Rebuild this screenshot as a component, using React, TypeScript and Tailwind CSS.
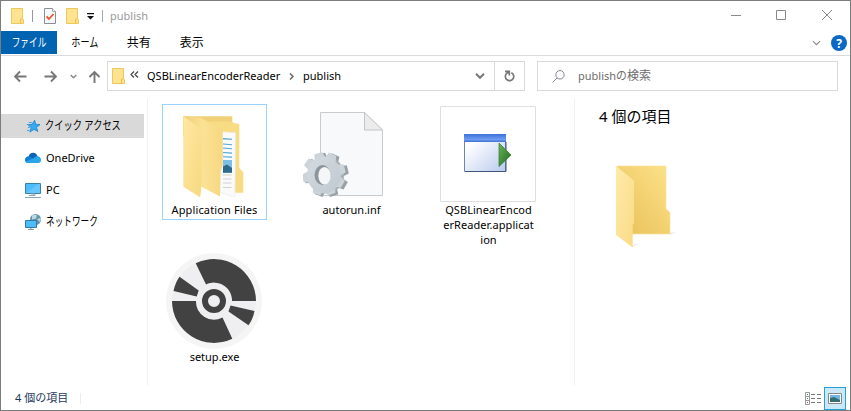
import type { ReactNode } from "react";

function SmallFolder() {
  return (
    <svg className="block h-[16px] w-[13px] shrink-0" viewBox="0 0 13 16">
      <path d="M.5.5h11v10l1 1v4H.5z" fill="#ffe391" stroke="#eec95a" />
      <path d="M9.5 15.5v-4.500h2" fill="none" stroke="#eabf48" />
    </svg>
  );
}

function CheckDoc() {
  return (
    <svg className="block h-[16px] w-[12px]" viewBox="0 0 12 16">
      <path d="M.5.5h8l3 3v12H.5z" fill="#f7fafc" stroke="#8b8f92" />
      <path d="M8.500.5v3h3" fill="#fff" stroke="#a4a7aa" />
      <path d="M2.500 8.500l2.500 2.500 4.500-5" fill="none" stroke="#e8562b" strokeWidth="1.800" />
    </svg>
  );
}

function Chevron({ className, color = "#777", w = 1.6 }: { className: string; color?: string; w?: number }) {
  return (
    <svg className={className} viewBox="0 0 10 6" fill="none" stroke={color} strokeWidth={w}>
      <path d="M1 .8l4 4 4-4" />
    </svg>
  );
}

function Arrow({ className, d }: { className: string; d: string }) {
  return (
    <svg className={className} viewBox="0 0 13 13" fill="none" stroke="#777" strokeWidth="1.9">
      <path d={d} />
    </svg>
  );
}

function FolderPreview() {
  return (
    <svg className="block h-[86px] w-[66px]" viewBox="0 0 66 86">
      <defs>
        <linearGradient id="pback" x1="0" y1="1" x2="1" y2="0">
          <stop offset="0.2" stopColor="#ecc661" />
          <stop offset="1" stopColor="#fde28a" />
        </linearGradient>
        <linearGradient id="pfront" x1="0" y1="0" x2="1" y2="1">
          <stop offset="0" stopColor="#ffeaa9" />
          <stop offset="1" stopColor="#f9db86" />
        </linearGradient>
      </defs>
      <path d="M50 67.500h11l-7 2.300zM17 80l7-2-7 4z" fill="#ececec" />
      <path d="M1 1h49v43l4 3.500v21.500H1z" fill="url(#pback)" stroke="#fbe49b" strokeWidth=".7" />
      <path d="M0 1l18 14.500V58l-1.300 2v22.500L0 70z" fill="url(#pfront)" />
    </svg>
  );
}

function FilesFolder() {
  return (
    <svg className="block size-[96px]" viewBox="0 0 96 96">
      <defs>
        <linearGradient id="ffront" x1="0" y1="0" x2="1" y2="1">
          <stop offset="0" stopColor="#ffe8a3" />
          <stop offset="1" stopColor="#f7d980" />
        </linearGradient>
        <linearGradient id="fmid" x1="0" y1="0" x2="1" y2="0">
          <stop offset="0" stopColor="#efcf73" />
          <stop offset="0.5" stopColor="#fbe195" />
          <stop offset="1" stopColor="#f6d87f" />
        </linearGradient>
      </defs>
      <path d="M17 10.200h49.300v20H17z" fill="#f1d178" />
      <path d="M43 15.500h20l10.300 2.700V62l4 4.300v20.400H54z" fill="#f8dc84" />
      <path d="M56 25.700l13.700 1L69 91.300l-15-4.600z" fill="#fafafa" stroke="#e3e3e3" strokeWidth=".5" />
      <path d="M57 33.500h9M57 69h8.500M57 73h8.500M57 77h8.500M57 81.500h8.500" stroke="#c3c8cb" strokeWidth=".8" />
      <path d="M57 32.500l9 .8M57 38l9 .7M57 42l9 .7M57 46.500l9 .6M57 50.700l9 .4" stroke="#4aa9dc" strokeWidth="1.100" />
      <path d="M57 54h9v12.700h-9z" fill="#7cc0e8" />
      <path d="M57 60.500l4-2 5 3.500v4.700h-9z" fill="#2f6a8c" />
      <path d="M17.300 10.200l18.400 2 21 12V60L54 65v25.500L34 80z" fill="url(#fmid)" />
      <path d="M17.300 10.200l17.900 12.500v62L34 91.300 17.300 80.700z" fill="url(#ffront)" />
    </svg>
  );
}

const teeth = [30, 70, 112, 170, 216, 256, 295, 346];

function InfFile() {
  return (
    <svg className="block size-[96px]" viewBox="0 0 96 96">
      <defs>
        <linearGradient id="gear" x1="0" y1="0" x2="1" y2="1">
          <stop offset="0" stopColor="#d5dbe0" />
          <stop offset="1" stopColor="#bfc9d0" />
        </linearGradient>
      </defs>
      <path d="M17.500 6.500h44L79.500 24v65.500h-62z" fill="#f8f9fa" stroke="#c9cacb" />
      <path d="M61.500 6.500V24h18z" fill="#ececec" stroke="#c4c5c6" />
      {teeth.map((a) => (
        <path key={"b" + a} d="M12-5.500l10 1v8.500l-10 2z" transform={`translate(23.500 69) rotate(${a})`} fill="#98a1a7" />
      ))}
      <ellipse cx="24" cy="69" rx="17" ry="18.500" fill="#a7b0b6" />
      {teeth.map((a) => (
        <path key={a} d="M12-6.500l9.500 2v8l-9.500 3z" transform={`translate(21 68) rotate(${a})`} fill="#ccd4d9" />
      ))}
      <ellipse cx="21" cy="69" rx="17" ry="18.500" fill="url(#gear)" />
      <ellipse cx="19.500" cy="69" rx="8" ry="10" fill="#8d969c" />
      <ellipse cx="21.500" cy="69.800" rx="6.200" ry="8.800" fill="#f5f6f7" />
    </svg>
  );
}

function ApplicationIcon() {
  return (
    <svg className="block size-[96px]" viewBox="0 0 96 96">
      <defs>
        <linearGradient id="win" x1="0" y1="0" x2="1" y2="1">
          <stop offset="0.2" stopColor="#fff" />
          <stop offset="1" stopColor="#b9c9ee" />
        </linearGradient>
        <linearGradient id="play" x1="0" y1="0" x2="1" y2="1">
          <stop offset="0" stopColor="#6bb45c" />
          <stop offset="1" stopColor="#1d6a1c" />
        </linearGradient>
        <linearGradient id="bar" x1="0" y1="0" x2="0" y2="1">
          <stop offset="0" stopColor="#3c70d8" />
          <stop offset="0.7" stopColor="#6f9cf2" />
          <stop offset="1" stopColor="#3e6fd0" />
        </linearGradient>
      </defs>
      <path d="M.5.5h95v95H.5z" fill="#fff" stroke="#dedede" />
      <path d="M24.500 28.500h41v37h-41z" fill="url(#win)" stroke="#6d84b4" />
      <path d="M24 28h42v8H24z" fill="url(#bar)" />
      <path d="M25 65.500h41V36" fill="none" stroke="#41557f" />
      <path d="M59 37l12 12-12 11.500z" fill="url(#play)" stroke="#347c2c" strokeWidth=".7" />
    </svg>
  );
}

function DiscIcon() {
  return (
    <svg className="block size-[96px]" viewBox="0 0 96 96">
      <circle cx="48" cy="48" r="48" fill="#f5f5f5" />
      <circle cx="48" cy="48" r="42" fill="#efeff2" />
      <path d="M29.700 10.300A42 42 0 0 1 90 48H66A18 18 0 0 0 40 31.500z" fill="#424242" />
      <path d="M66.300 85.700A42 42 0 0 1 6 48h24a18 18 0 0 0 26.500 16.500z" fill="#424242" />
      <path d="M13.500 23.700L32.700 37.500l-2 6L7.500 38q1.500-8 6-14.300z" fill="#424242" />
      <path d="M82.500 72.300L62.500 58.500l2-6L88.500 58q-1.500 8-6 14.300z" fill="#424242" />
      <circle cx="48" cy="48" r="9" fill="#efeff2" stroke="#424242" strokeWidth="6" />
    </svg>
  );
}

function StarIcon() {
  return (
    <svg className="block size-[16px]" viewBox="0 0 16 16">
      <path d="M10 2l1 4.300 4.700.2-3.800 2.800 1.400 4.400-4-2.200L5 14.300l1.300-4.500-3-3 4-.5z" fill="#35aaf0" stroke="#1d84cc" strokeWidth=".8" />
      <path d="M4 4.500h3M2 6.500h2M3 9.500h2M2 12.500h2.500" stroke="#3a9fde" />
    </svg>
  );
}

function CloudIcon() {
  return (
    <svg className="block size-[16px]" viewBox="0 0 16 16">
      <path d="M3.500 7C4 2 11 1 12.500 6.200L13 8 3 11z" fill="#0f62b5" />
      <path d="M0 10c0-3.500 4-4.800 6.500-2.500L14 13H3c-2 0-3-1.300-3-3z" fill="#1280d6" />
      <path d="M9 8c1-2.300 7-2.700 7 2 0 2-1 3-3 3H3.500C1.500 13 1 12 1 11.500z" fill="#29a5ea" />
    </svg>
  );
}

function PcIcon() {
  return (
    <svg className="block size-[16px]" viewBox="0 0 16 16">
      <path d="M.5 1.500h15v10H.5z" fill="#4cbcfb" stroke="#3d7fa6" />
      <path d="M1 11l12-9h2v9z" fill="#7fd2ff" opacity=".5" />
      <path d="M6 12h4v1.500H4M0 15.500h16" fill="none" stroke="#8fa5b3" />
    </svg>
  );
}

function NetworkIcon() {
  return (
    <svg className="block size-[16px]" viewBox="0 0 16 16">
      <circle cx="10.500" cy="5.500" r="5.500" fill="#6794ab" />
      <path d="M7 1.500q3-1.500 5 0l-1 3-4 1zM12 5l4-1-1 4z" fill="#b9d8e4" />
      <path d="M.5 6.500h11v7H.5z" fill="#4bbdf8" stroke="#35779f" />
      <path d="M3 15.500h6M6 14v1.500" stroke="#7f99a8" />
    </svg>
  );
}

function NavItem({ icon, active, children }: { icon: ReactNode; active?: boolean; children: ReactNode }) {
  return (
    <div className={`mb-2 flex h-[24px] w-[143px] items-center gap-[5px] pl-6 ${active ? "bg-[#d9d9d9]" : ""}`}>
      {icon}
      {children}
    </div>
  );
}

function Tile({ icon, selected, children }: { icon: ReactNode; selected?: boolean; children: ReactNode }) {
  return (
    <div className={`h-[116px] w-[105px] border pt-px pl-[3px] ${selected ? "border-[#99d1ff]" : "border-transparent"}`}>
      {icon}
      <div className="w-[97px] text-center text-[11px] leading-[15px] whitespace-nowrap">{children}</div>
    </div>
  );
}

export default function App() {
  return (
    <div className="flex h-[411px] w-[851px] flex-col overflow-hidden border border-[#7a7d7c] bg-white font-['Noto_Sans','Noto_Sans_CJK_JP',sans-serif] text-[12px] text-black">
      <header className="flex h-[30px] items-center">
        <div className="flex flex-1 items-center pl-[10px]">
          <SmallFolder />
          <span className="ml-[8px] h-[12px] w-px bg-[#999]" />
          <span className="ml-[11px]"><CheckDoc /></span>
          <span className="ml-[10px]"><SmallFolder /></span>
          <svg className="ml-[8px] h-[7px] w-[7px]" viewBox="0 0 7 7">
            <path d="M0 0h7v1.200H0zM0 3h7L3.500 6.500z" fill="#111" />
          </svg>
          <span className="ml-[8px] h-[12px] w-px bg-[#aaa]" />
          <span className="ml-[7px] text-[11px] text-[#999]">publish</span>
        </div>
        <svg className="mr-[17px] h-[12px] w-[103px]" viewBox="0 0 103 12" fill="none" stroke="#8a8a8a">
          <path d="M1 5.500h10M46.500.5h9v9h-9zM92 0l10 10M102 0l-10 10" />
        </svg>
      </header>
      <nav className="flex h-[25px] border-b border-[#dadbdc] leading-[23px]">
        <div className="flex h-[23px] w-[56px] justify-center bg-[#0063b1] text-white">
          <span className="scale-x-[.72] whitespace-nowrap">ファイル</span>
        </div>
        <span className="ml-[10px] scale-x-[.76]">ホーム</span>
        <span className="ml-[24px]">共有</span>
        <span className="ml-[29px]">表示</span>
        <div className="flex-1" />
        <Chevron className="mt-[9px] mr-[10px] h-[6px] w-[9px]" color="#8a8a8a" w={1.2} />
        <div className="mt-[4px] mr-[3px] flex size-[16px] items-center justify-center rounded-full bg-[#0a69c5] text-[12px] font-bold text-white">?</div>
      </nav>
      <section className="flex h-[41px] items-start pt-[5px]">
        <div className="flex h-[30px] w-[106px] items-center pl-[13px]">
          <Arrow className="size-[13px]" d="M6 1.500l-5 5 5 5M1 6.500h11.500" />
          <Arrow className="ml-[17px] size-[13px]" d="M7 1.500l5 5-5 5M12 6.500H.5" />
          <Chevron className="ml-[13px] h-[5px] w-[7px]" color="#888" w={2} />
          <Arrow className="ml-[11px] size-[13px]" d="M1.500 7l5-5 5 5M6.500 2v11" />
        </div>
        <div className="flex h-[30px] w-[418px] items-center border border-[#d9d9d9]">
          <span className="ml-[4px]"><SmallFolder /></span>
          <svg className="mb-[3px] ml-[5px] h-[7px] w-[9px]" viewBox="0 0 9 7" fill="none" stroke="#444" strokeWidth="1.200">
            <path d="M4 .5l-3 3 3 3M8 .5l-3 3 3 3" />
          </svg>
          <span className="ml-[8px] w-[134px] text-[11px] whitespace-nowrap">QSBLinearEncoderReader</span>
          <svg className="ml-[8px] h-[7px] w-[5px]" viewBox="0 0 5 7" fill="none" stroke="#666" strokeWidth="1.500">
            <path d="M1 .5l3 3-3 3" />
          </svg>
          <span className="ml-[9px] text-[11px]">publish</span>
          <div className="flex-1" />
          <Chevron className="mr-[9px] h-[6px] w-[10px]" w={2} />
          <div className="flex h-[28px] w-[30px] items-center justify-center border-l border-[#d9d9d9]">
            <svg className="h-[12px] w-[11px]" viewBox="0 0 11 12" fill="none" stroke="#777" strokeWidth="1.700">
              <path d="M7.300 2.700A4.200 4.200 0 1 1 2.700 3.400L5 1.500M1 1.300h4.300V5.500" />
            </svg>
          </div>
        </div>
        <div className="ml-[12px] flex h-[30px] w-[301px] items-center border border-[#d9d9d9] text-[#6d6d6d]">
          <svg className="ml-[14px] size-[13px]" viewBox="0 0 13 13" fill="none" stroke="#8a8290">
            <circle cx="8" cy="4.800" r="4.200" /><path d="M5 8L.5 12.500" />
          </svg>
          <span className="ml-[13px] text-[11px]">publish</span>
          <span className="origin-left scale-x-[.9]">の</span><span className="-ml-px">検索</span>
        </div>
      </section>
      <main className="flex h-[289px]">
        <aside className="my-px w-[147px] border-r border-[#f0f0f0] pt-[16px]">
          <NavItem icon={<StarIcon />} active><span className="w-[100px] origin-left scale-x-[.77] whitespace-nowrap">クイック アクセス</span></NavItem>
          <NavItem icon={<CloudIcon />}><span className="text-[11px]">OneDrive</span></NavItem>
          <NavItem icon={<PcIcon />}><span className="text-[11px]">PC</span></NavItem>
          <NavItem icon={<NetworkIcon />}><span className="origin-left scale-x-[.72] whitespace-nowrap">ネットワーク</span></NavItem>
        </aside>
        <div className="grid w-[426px] grid-cols-[repeat(3,105px)] content-start gap-x-8 gap-y-[31px] pt-[7px] pl-[14px]">
          <Tile icon={<FilesFolder />} selected><span className="tracking-[0.13px]">Application Files</span></Tile>
          <Tile icon={<InfFile />}>autorun.inf</Tile>
          <Tile icon={<ApplicationIcon />}><span className="tracking-[0.07px]">QSBLinearEncod<br />erReader.applicat<br />ion</span></Tile>
          <Tile icon={<DiscIcon />}>setup.exe</Tile>
        </div>
        <section className="my-px flex-1 border-l border-[#f0f0f0] pl-[24px]">
          <h1 className="mt-[6px] h-[24px] text-[15px] leading-[24px] whitespace-nowrap">4 個の項目</h1>
          <div className="mt-[37px] ml-[17px]"><FolderPreview /></div>
        </section>
      </main>
      <footer className="flex h-[24px] items-center">
        <span className="ml-[14px] w-[65px] text-[11px] whitespace-nowrap text-[#1e395b]">4 個の項目</span>
        <span className="h-[11px] w-px bg-[#ececec]" />
        <div className="flex-1" />
        <svg className="mr-[3px] h-[13px] w-[16px]" viewBox="0 0 16 13" fill="none">
          <path d="M.5.5h4v12h-4zM.5 4.500h4M.5 8.500h4" stroke="#999" />
          <path d="M6 2.500h4m2 0h4M6 6.500h4m2 0h4M6 10.500h4m2 0h4" stroke="#777" />
          <path d="M2 2.500h1" stroke="#369" /><path d="M2 6.500h1" stroke="#298" /><path d="M2 10.500h1" stroke="#b33" />
        </svg>
        <div className="mr-[4px] flex h-[23px] w-[22px] items-center justify-center self-end border border-[#26a0da] bg-[#cbe8f6]">
          <svg className="h-[11px] w-[14px]" viewBox="0 0 14 11">
            <path d="M.5.5h13v10H.5z" fill="#fff" stroke="#888" />
            <path d="M2 2h10v7H2z" fill="#72b6e8" /><path d="M2 5l4-1 6 3v2H2z" fill="#356e72" />
          </svg>
        </div>
      </footer>
    </div>
  );
}
